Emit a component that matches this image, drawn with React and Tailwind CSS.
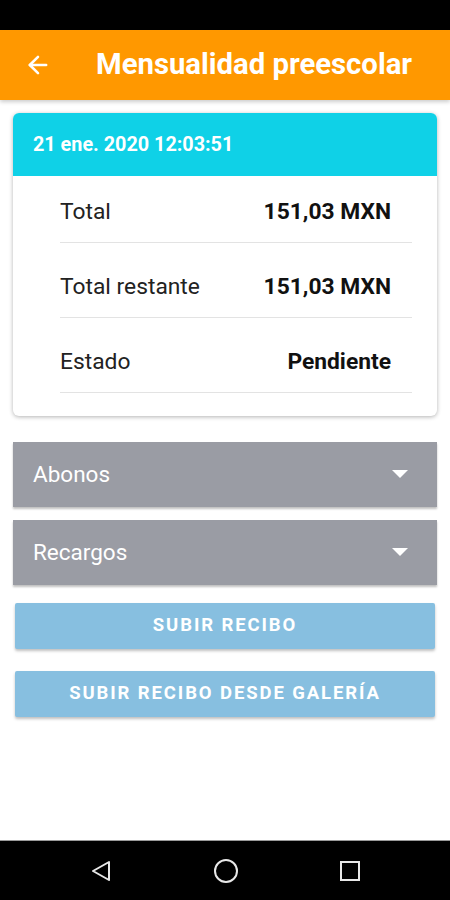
import { ArrowLeft } from 'lucide-react';

const rows = [
  { label: 'Total', value: '151,03 MXN' },
  { label: 'Total restante', value: '151,03 MXN' },
  { label: 'Estado', value: 'Pendiente' },
];

const Caret = () => (
  <svg width="16" height="9" viewBox="0 0 16 9" className="mr-[9px]">
    <path d="M0 0 L16 0 L8 8 Z" fill="#ffffff" />
  </svg>
);

const Panel = ({ title }) => (
  <div className="h-[65px] bg-[#9a9ca4] flex items-center justify-between px-[20px] shadow-[0_2px_2px_rgba(0,0,0,0.25)]">
    <span className="text-white text-[22.5px]">{title}</span>
    <Caret />
  </div>
);

const UploadButton = ({ children }) => (
  <button className="h-[46px] w-full bg-[#87bfe0] text-white font-bold text-[18.5px] tracking-[1.9px] rounded-[2px] shadow-[0_2px_3px_rgba(0,0,0,0.25)]">
    {children}
  </button>
);

export default function App() {
  return (
    <div className="w-[450px] h-[900px] bg-white flex flex-col font-['Roboto',sans-serif] overflow-hidden">
      <div className="h-[30px] bg-black shrink-0" />

      <header className="h-[70px] bg-[#ff9800] flex items-center shrink-0 shadow-[0_2px_4px_rgba(0,0,0,0.2)] z-10">
        <ArrowLeft className="ml-[24px] text-white" size={28} strokeWidth={2.2} />
        <h1 className="ml-[44px] text-white font-bold text-[29.3px]">Mensualidad preescolar</h1>
      </header>

      <main className="flex-1 flex flex-col px-[13px] pt-[13px]">
        <div className="rounded-[6px] shadow-[0_1px_4px_rgba(0,0,0,0.3)] overflow-hidden bg-white">
          <div className="h-[63px] bg-[#0fd1e7] flex items-center px-[20px]">
            <span className="text-white font-bold text-[19.8px]">21 ene. 2020 12:03:51</span>
          </div>
          <div className="pl-[47px] pr-[25px] pb-[23px]">
            {rows.map((r, i) => (
              <div
                key={r.label}
                className={`flex items-center justify-between border-b border-[#e3e3e3] pr-[21px] ${i === 0 ? 'h-[67px] pt-[7px]' : 'h-[75px] pt-[15px]'}`}
              >
                <span className="text-[#222] text-[22.8px]">{r.label}</span>
                <span className="text-[#111] font-bold text-[22.8px]">{r.value}</span>
              </div>
            ))}
          </div>
        </div>

        <div className="mt-[26px] flex flex-col gap-[13px]">
          <Panel title="Abonos" />
          <Panel title="Recargos" />
        </div>

        <div className="mt-[18px] px-[2px] flex flex-col gap-[22px]">
          <UploadButton>SUBIR RECIBO</UploadButton>
          <UploadButton>SUBIR RECIBO DESDE GALERÍA</UploadButton>
        </div>
      </main>

      <nav className="h-[60px] bg-black border-t border-[#9a9a9a] flex items-center justify-center gap-[100px] shrink-0">
        <svg width="24" height="24" viewBox="0 0 24 24">
          <path d="M20 3 L4 12 L20 21 Z" fill="none" stroke="#e8e8e8" strokeWidth="2" strokeLinejoin="round" />
        </svg>
        <svg width="26" height="26" viewBox="0 0 26 26">
          <circle cx="13" cy="13" r="11" fill="none" stroke="#e8e8e8" strokeWidth="2" />
        </svg>
        <svg width="22" height="22" viewBox="0 0 22 22">
          <rect x="2" y="2" width="18" height="18" fill="none" stroke="#e8e8e8" strokeWidth="2" />
        </svg>
      </nav>
    </div>
  );
}
